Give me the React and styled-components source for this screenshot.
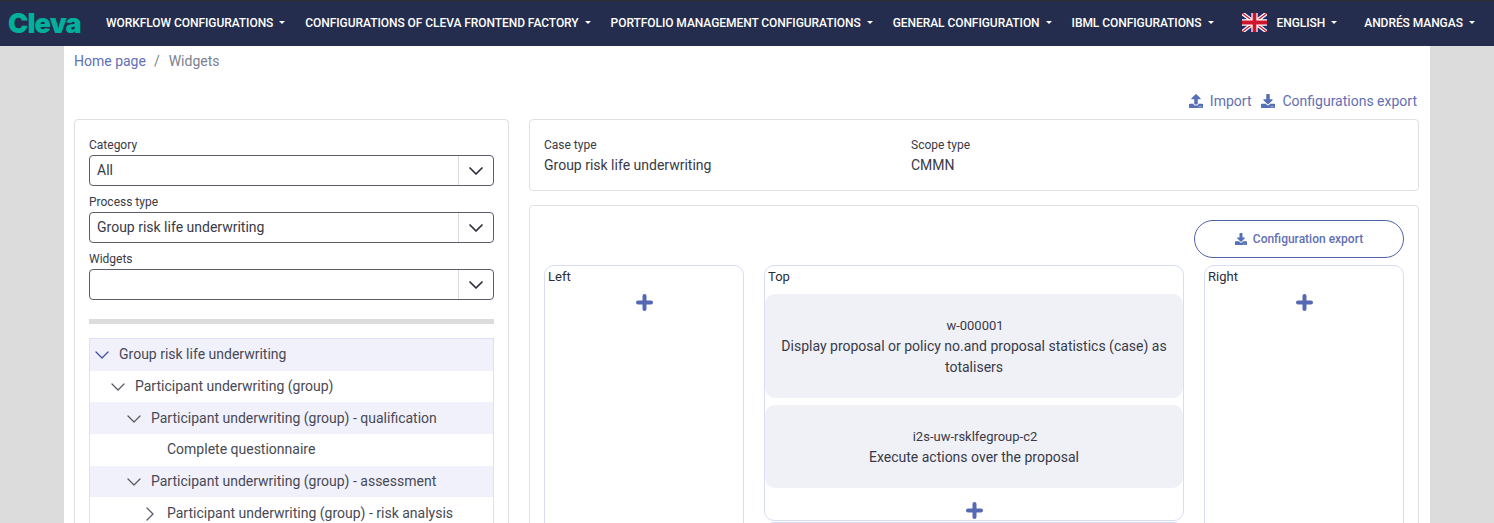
import React from 'react'
import styled, { createGlobalStyle } from 'styled-components'
import { FaDownload, FaUpload } from 'react-icons/fa'
import { ChevronDown, ChevronRight } from 'lucide-react'

const GlobalStyle = createGlobalStyle`
  html, body {
    margin: 0;
    height: 100%;
    overflow: hidden;
    background: #dcdcdc;
    font-family: Roboto, "Liberation Sans", sans-serif;
    color: #383a47;
  }
  * { box-sizing: border-box; }
`

const Navbar = styled.header`
  display: flex;
  align-items: center;
  height: 46px;
  padding: 0 0 2px 8px;
  background: #242d4d;
  border-top: 1px solid #2e2e2e;
  color: #fff;
`

const Logo = styled.div`
  width: 98px;
  margin-top: 2px;
  font-family: Inter, sans-serif;
  font-size: 27px;
  font-weight: 900;
  letter-spacing: -0.8px;
  color: #00b09b;
`

const NavItem = styled.div`
  display: flex;
  align-items: center;
  margin-left: ${(p) => p.$gap ?? 20}px;
  font-size: 12px;
  font-weight: 500;
  letter-spacing: -0.06px;
  white-space: nowrap;
  &::after {
    content: '';
    margin-left: 6px;
    border-top: 3px solid #fff;
    border-left: 3px solid transparent;
    border-right: 3px solid transparent;
  }
`

const FlagBox = styled.svg`
  display: block;
  width: 25px;
  height: 19px;
  margin-left: 28px;
`

const Sheet = styled.main`
  width: 1366px;
  height: 477px;
  margin-left: 64px;
  padding: 0 11px 0 10px;
  background: #fff;
  overflow: hidden;
`

const Breadcrumb = styled.nav`
  display: flex;
  height: 30px;
  align-items: center;
  font-size: 14px;
  color: #7b7f8f;
`

const Crumb = styled.span`
  color: #5f70b5;
`

const Separator = styled.span`
  margin: 0 9px 0 8px;
`

const Actions = styled.div`
  display: flex;
  justify-content: flex-end;
  align-items: center;
  gap: 10px;
  height: 43px;
  padding: 7px 2px 0 0;
`

const ActionLink = styled.a`
  display: flex;
  align-items: center;
  gap: 7px;
  font-size: 14px;
  color: #5f70b5;
  svg { width: 14px; height: 14px; color: #5670b8; }
`

const Columns = styled.div`
  display: grid;
  grid-template-columns: 435px 890px;
  gap: 20px;
`

const Card = styled.section`
  border: 1px solid #e0e0e0;
  border-radius: 4px;
  background: #fff;
`

const FilterCard = styled(Card)`
  height: 420px;
  padding: 17px 14px 0;
`

const FieldLabel = styled.label`
  display: block;
  height: 18px;
  font-size: 12px;
  line-height: 16px;
`

const Select = styled.div`
  display: flex;
  height: 31px;
  margin-bottom: 8px;
  border: 1px solid #5b5d69;
  border-radius: 4px;
  font-size: 14px;
`

const SelectValue = styled.div`
  flex: 1;
  padding: 0 7px;
  line-height: 29px;
`

const SelectArrow = styled.div`
  display: flex;
  align-items: center;
  justify-content: center;
  width: 35px;
  border-left: 1px solid #dcdcdc;
  color: #2b2d3a;
  svg { width: 24px; height: 24px; stroke-width: 1.7; }
`

const Rule = styled.div`
  height: 5px;
  margin: 19px 0 14px;
  background: #dcdcdc;
`

const Tree = styled.div`
  border: 1px solid #dde0f8;
  border-bottom: none;
`

const TreeRow = styled.div`
  display: flex;
  align-items: center;
  height: 31.7px;
  padding: 0 0 1px ${(p) => 3 + p.$level * 16}px;
  font-size: 14px;
  color: #474955;
  background: ${(p) => (p.$shaded ? '#f1f1fc' : '#fff')};
`

const TreeToggle = styled.span`
  display: flex;
  justify-content: center;
  width: 18px;
  margin-right: 8px;
  color: ${(p) => (p.$root ? '#3f4ea8' : '#595b66')};
  svg { flex-shrink: 0; width: 24px; height: 24px; stroke-width: 1.3; transform: translateY(1px); }
`

const RightColumn = styled.div`
  display: flex;
  flex-direction: column;
  gap: 14px;
`

const InfoCard = styled(Card)`
  display: grid;
  grid-template-columns: 367px 1fr;
  height: 72px;
  padding: 17px 14px;
`

const InfoLabel = styled.div`
  height: 19px;
  font-size: 12px;
  line-height: 16px;
`

const InfoValue = styled.div`
  font-size: 14px;
  line-height: 18px;
`

const LayoutCard = styled(Card)`
  height: 340px;
  padding: 14px;
`

const ExportRow = styled.div`
  display: flex;
  justify-content: flex-end;
  height: 45px;
`

const ExportButton = styled.button`
  display: flex;
  align-items: center;
  justify-content: center;
  gap: 6px;
  width: 210px;
  height: 38px;
  border: 1px solid #4f63ab;
  border-radius: 19px;
  background: #fff;
  font-family: inherit;
  font-size: 12px;
  font-weight: 500;
  color: #5f70b5;
  svg { width: 12px; height: 12px; color: #5670b8; }
`

const ZoneGrid = styled.div`
  display: grid;
  grid-template-columns: 200px 420px 200px;
  gap: 20px;
`

const Zone = styled.div`
  min-height: ${(p) => p.$height}px;
  margin-bottom: 1px;
  padding-bottom: 1px;
  border: 1px solid #d8dcf6;
  border-radius: 10px;
`

const ZoneTitle = styled.div`
  height: 28px;
  padding: 3px 3px 0;
  font-size: 13px;
  line-height: 15px;
  color: #2b2d3a;
`

const AddButton = styled.div`
  display: flex;
  justify-content: center;
  height: ${(p) => p.$height}px;
  padding-top: ${(p) => p.$top}px;
  color: #5568b4;
`

const PlusIcon = () => (
  <svg width="17" height="17" viewBox="0 0 17 17" fill="none" stroke="currentColor" strokeWidth="4" strokeLinecap="round">
    <path d="M8.5 2v13M2 8.5h13" />
  </svg>
)

const Widget = styled.div`
  display: flex;
  flex-direction: column;
  justify-content: center;
  height: ${(p) => p.$height}px;
  margin-bottom: 7px;
  padding: 0 14px;
  border-radius: 10px;
  background: #f0f1f7;
  text-align: center;
  font-size: 14px;
  line-height: 21px;
`

const WidgetId = styled.div`
  padding-left: 2px;
  font-size: 13px;
`

const ukFlag = (
  <FlagBox viewBox="0 0 60 45" preserveAspectRatio="none">
    <rect width="60" height="45" fill="#1f2a6b" />
    <path d="M0 0L60 45M60 0L0 45" stroke="#fff" strokeWidth="9" />
    <path d="M0 0L60 45M60 0L0 45" stroke="#cf142b" strokeWidth="3" />
    <path d="M30 0V45M0 22.5H60" stroke="#fff" strokeWidth="15" />
    <path d="M30 0V45M0 22.5H60" stroke="#cf142b" strokeWidth="9" />
  </FlagBox>
)

const navItems = [
  'Workflow configurations',
  'Configurations of Cleva Frontend Factory',
  'Portfolio management configurations',
  'General configuration',
  'IBML configurations',
]

const fields = [
  { label: 'Category', value: 'All' },
  { label: 'Process type', value: 'Group risk life underwriting' },
  { label: 'Widgets', value: '' },
]

const treeRows = [
  { text: 'Group risk life underwriting', level: 0, shaded: true, open: true, root: true },
  { text: 'Participant underwriting (group)', level: 1, open: true },
  { text: 'Participant underwriting (group) - qualification', level: 2, shaded: true, open: true },
  { text: 'Complete questionnaire', level: 3, leaf: true },
  { text: 'Participant underwriting (group) - assessment', level: 2, shaded: true, open: true },
  { text: 'Participant underwriting (group) - risk analysis', level: 3, closed: true },
]

const App = () => (
  <>
    <GlobalStyle />
    <Navbar>
      <Logo>Cleva</Logo>
      {navItems.map((item, i) => (
        <NavItem key={item} $gap={i === 0 ? 0 : 20}>{item.toUpperCase()}</NavItem>
      ))}
      {ukFlag}
      <NavItem $gap={10}>ENGLISH</NavItem>
      <NavItem $gap={27}>ANDRÉS MANGAS</NavItem>
    </Navbar>
    <Sheet>
      <Breadcrumb>
        <Crumb>Home page</Crumb>
        <Separator>/</Separator>
        Widgets
      </Breadcrumb>
      <Actions>
        <ActionLink><FaUpload /> Import</ActionLink>
        <ActionLink><FaDownload /> Configurations export</ActionLink>
      </Actions>
      <Columns>
        <FilterCard>
          {fields.map((f) => (
            <div key={f.label}>
              <FieldLabel>{f.label}</FieldLabel>
              <Select>
                <SelectValue>{f.value}</SelectValue>
                <SelectArrow><ChevronDown /></SelectArrow>
              </Select>
            </div>
          ))}
          <Rule />
          <Tree>
            {treeRows.map((r) => (
              <TreeRow key={r.text} $level={r.level} $shaded={r.shaded}>
                <TreeToggle $root={r.root}>
                  {r.open && <ChevronDown />}
                  {r.closed && <ChevronRight />}
                </TreeToggle>
                {r.text}
              </TreeRow>
            ))}
          </Tree>
        </FilterCard>
        <RightColumn>
          <InfoCard>
            <div>
              <InfoLabel>Case type</InfoLabel>
              <InfoValue>Group risk life underwriting</InfoValue>
            </div>
            <div>
              <InfoLabel>Scope type</InfoLabel>
              <InfoValue>CMMN</InfoValue>
            </div>
          </InfoCard>
          <LayoutCard>
            <ExportRow>
              <ExportButton><FaDownload /> Configuration export</ExportButton>
            </ExportRow>
            <ZoneGrid>
              <Zone $height={400}>
                <ZoneTitle>Left</ZoneTitle>
                <AddButton $height={30} $top={0}><PlusIcon /></AddButton>
              </Zone>
              <div>
                <Zone $height={255}>
                  <ZoneTitle>Top</ZoneTitle>
                  <Widget $height={104}>
                    <WidgetId>w-000001</WidgetId>
                    Display proposal or policy no.and proposal statistics (case) as totalisers
                  </Widget>
                  <Widget $height={83}>
                    <WidgetId>i2s-uw-rsklfegroup-c2</WidgetId>
                    Execute actions over the proposal
                  </Widget>
                  <AddButton $height={24} $top={7}><PlusIcon /></AddButton>
                </Zone>
                <Zone $height={100} />
              </div>
              <Zone $height={400}>
                <ZoneTitle>Right</ZoneTitle>
                <AddButton $height={30} $top={0}><PlusIcon /></AddButton>
              </Zone>
            </ZoneGrid>
          </LayoutCard>
        </RightColumn>
      </Columns>
    </Sheet>
  </>
)

export default App
